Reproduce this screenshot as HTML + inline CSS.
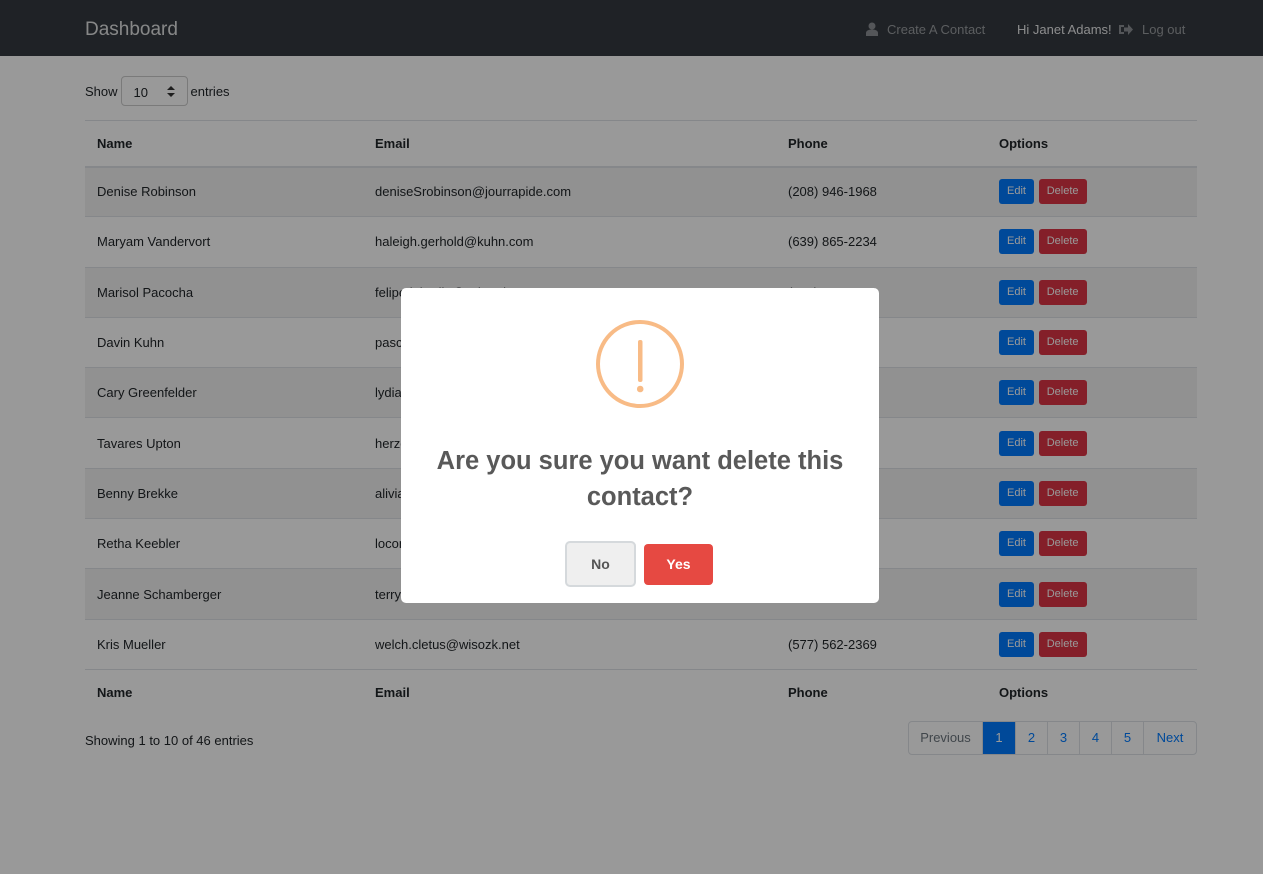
<!DOCTYPE html>
<html><head><meta charset="utf-8"><style>
*{box-sizing:border-box;margin:0;padding:0}
body{width:1263px;height:874px;overflow:hidden;background:#fff;font-family:"Liberation Sans",sans-serif;font-size:13px;color:#212529;position:relative}
.nav{height:56px;background:#343a40;position:relative}
.brand{position:absolute;left:85px;top:19px;font-size:19px;color:#fff;opacity:.85}
.nl{position:absolute;top:22px;font-size:13px;color:#9a9da0}
.show{position:absolute;left:85px;top:76px;display:flex;align-items:center;gap:3px}
.sel{width:67px;height:30px;border:1px solid #ccc;border-radius:4px;padding:8px 12px;position:relative}
.sel:after{content:"";position:absolute;right:12px;top:9px;border:4px solid transparent;border-bottom:4px solid #333;border-top:none}
.sel:before{content:"";position:absolute;right:12px;top:16px;border:4px solid transparent;border-top:4px solid #333;border-bottom:none}
table{position:absolute;left:85px;top:120px;width:1112px;border-collapse:collapse}
th,td{text-align:left;padding:0 12px;border-top:1px solid #dee2e6}
th{height:46px;font-weight:bold}
thead th{border-bottom:2px solid #dee2e6}
td{height:50.3px}
tbody tr:nth-child(odd){background:#f2f2f2}
.b{display:inline-block;font-size:11px;color:#fff;height:25px;line-height:25px;border-radius:3px;text-align:center;vertical-align:middle}
.e{background:#007bff;width:35px;margin-right:1px}.d{background:#dc3545;width:48px}
.info{position:absolute;left:85px;top:733px}
.pg{position:absolute;left:908px;top:721px;display:flex;border:1px solid #dee2e6;border-radius:4px;height:34px}
.pg span{width:32px;text-align:center;line-height:32px;color:#007bff;border-left:1px solid #dee2e6}
.pg span:first-child{border-left:none;color:#6c757d;width:73px}
.pg span:last-child{width:53px}
.pg .a{background:#007bff;color:#fff;width:33px}
.ov{position:absolute;inset:0;background:rgba(0,0,0,.4)}
.m{position:absolute;left:401px;top:288px;width:478px;height:315px;background:#fff;border-radius:5px;text-align:center}
.m h2{position:absolute;top:155px;left:0;width:100%;font-size:25.5px;font-weight:600;color:#595959;line-height:36px}
.no{position:absolute;left:164px;top:253px;width:71px;height:46px;border:2px solid #d5d9dc;background:#efefef;border-radius:5px;line-height:42px;font-size:14px;color:#555;font-weight:600}
.yes{position:absolute;left:243px;top:256px;width:69px;height:41px;background:#e64942;border-radius:4px;color:#fff;line-height:41px;font-size:14px;font-weight:bold}
</style></head><body>
<div class="nav"><div class="brand">Dashboard</div>
<svg style="position:absolute;left:866px;top:22px" width="12" height="14" viewBox="0 0 12 14"><circle cx="6" cy="4" r="3.5" fill="#8d9094"/><path d="M0 14v-3c0-2 2-3.5 6-3.5s6 1.5 6 3.5v3z" fill="#8d9094"/></svg>
<div class="nl" style="left:887px">Create A Contact</div>
<div class="nl" style="left:1017px;color:#e9eaeb">Hi Janet Adams!</div>
<svg style="position:absolute;left:1119px;top:24px" width="14" height="11" viewBox="0 0 14 11"><path d="M0 1h5v2H2v5h3v2H0z M5 3.5h4V0l5 5.5-5 5.5V7.5H5z" fill="#8d9094"/></svg>
<div class="nl" style="left:1142px">Log out</div></div>
<div class="show">Show <div class="sel">10</div> entries</div>
<table><thead><tr><th style="width:278px">Name</th><th style="width:413px">Email</th><th style="width:211px">Phone</th><th>Options</th></tr></thead><tbody>
<tr><td>Denise Robinson</td><td>deniseSrobinson@jourrapide.com</td><td>(208) 946-1968</td><td><span class="b e">Edit</span> <span class="b d">Delete</span></td></tr>
<tr><td>Maryam Vandervort</td><td>haleigh.gerhold@kuhn.com</td><td>(639) 865-2234</td><td><span class="b e">Edit</span> <span class="b d">Delete</span></td></tr>
<tr><td>Marisol Pacocha</td><td>felipe.labadie@schmeler.com</td><td>(467) 344-0826</td><td><span class="b e">Edit</span> <span class="b d">Delete</span></td></tr>
<tr><td>Davin Kuhn</td><td>pascale@example.com</td><td></td><td><span class="b e">Edit</span> <span class="b d">Delete</span></td></tr>
<tr><td>Cary Greenfelder</td><td>lydia@example.com</td><td></td><td><span class="b e">Edit</span> <span class="b d">Delete</span></td></tr>
<tr><td>Tavares Upton</td><td>herzog@example.com</td><td></td><td><span class="b e">Edit</span> <span class="b d">Delete</span></td></tr>
<tr><td>Benny Brekke</td><td>alivia@example.com</td><td></td><td><span class="b e">Edit</span> <span class="b d">Delete</span></td></tr>
<tr><td>Retha Keebler</td><td>loconnor@example.com</td><td></td><td><span class="b e">Edit</span> <span class="b d">Delete</span></td></tr>
<tr><td>Jeanne Schamberger</td><td>terry@example.com</td><td></td><td><span class="b e">Edit</span> <span class="b d">Delete</span></td></tr>
<tr><td>Kris Mueller</td><td>welch.cletus@wisozk.net</td><td>(577) 562-2369</td><td><span class="b e">Edit</span> <span class="b d">Delete</span></td></tr>
</tbody><tfoot><tr><th>Name</th><th>Email</th><th>Phone</th><th>Options</th></tr></tfoot></table>
<div class="info">Showing 1 to 10 of 46 entries</div>
<div class="pg"><span>Previous</span><span class="a">1</span><span>2</span><span>3</span><span>4</span><span>5</span><span>Next</span></div>
<div class="ov"></div>
<div class="m">
<svg style="position:absolute;left:195px;top:32px" width="88" height="88" viewBox="0 0 88 88"><circle cx="44" cy="44" r="42" fill="none" stroke="#f8bb86" stroke-width="4"/><rect x="42" y="20" width="4.5" height="42" rx="2" fill="#f8bb86"/><circle cx="44.2" cy="69" r="3.3" fill="#f8bb86"/></svg>
<h2>Are you sure you want delete this<br>contact?</h2>
<div class="no">No</div><div class="yes">Yes</div>
</div>
</body></html>
